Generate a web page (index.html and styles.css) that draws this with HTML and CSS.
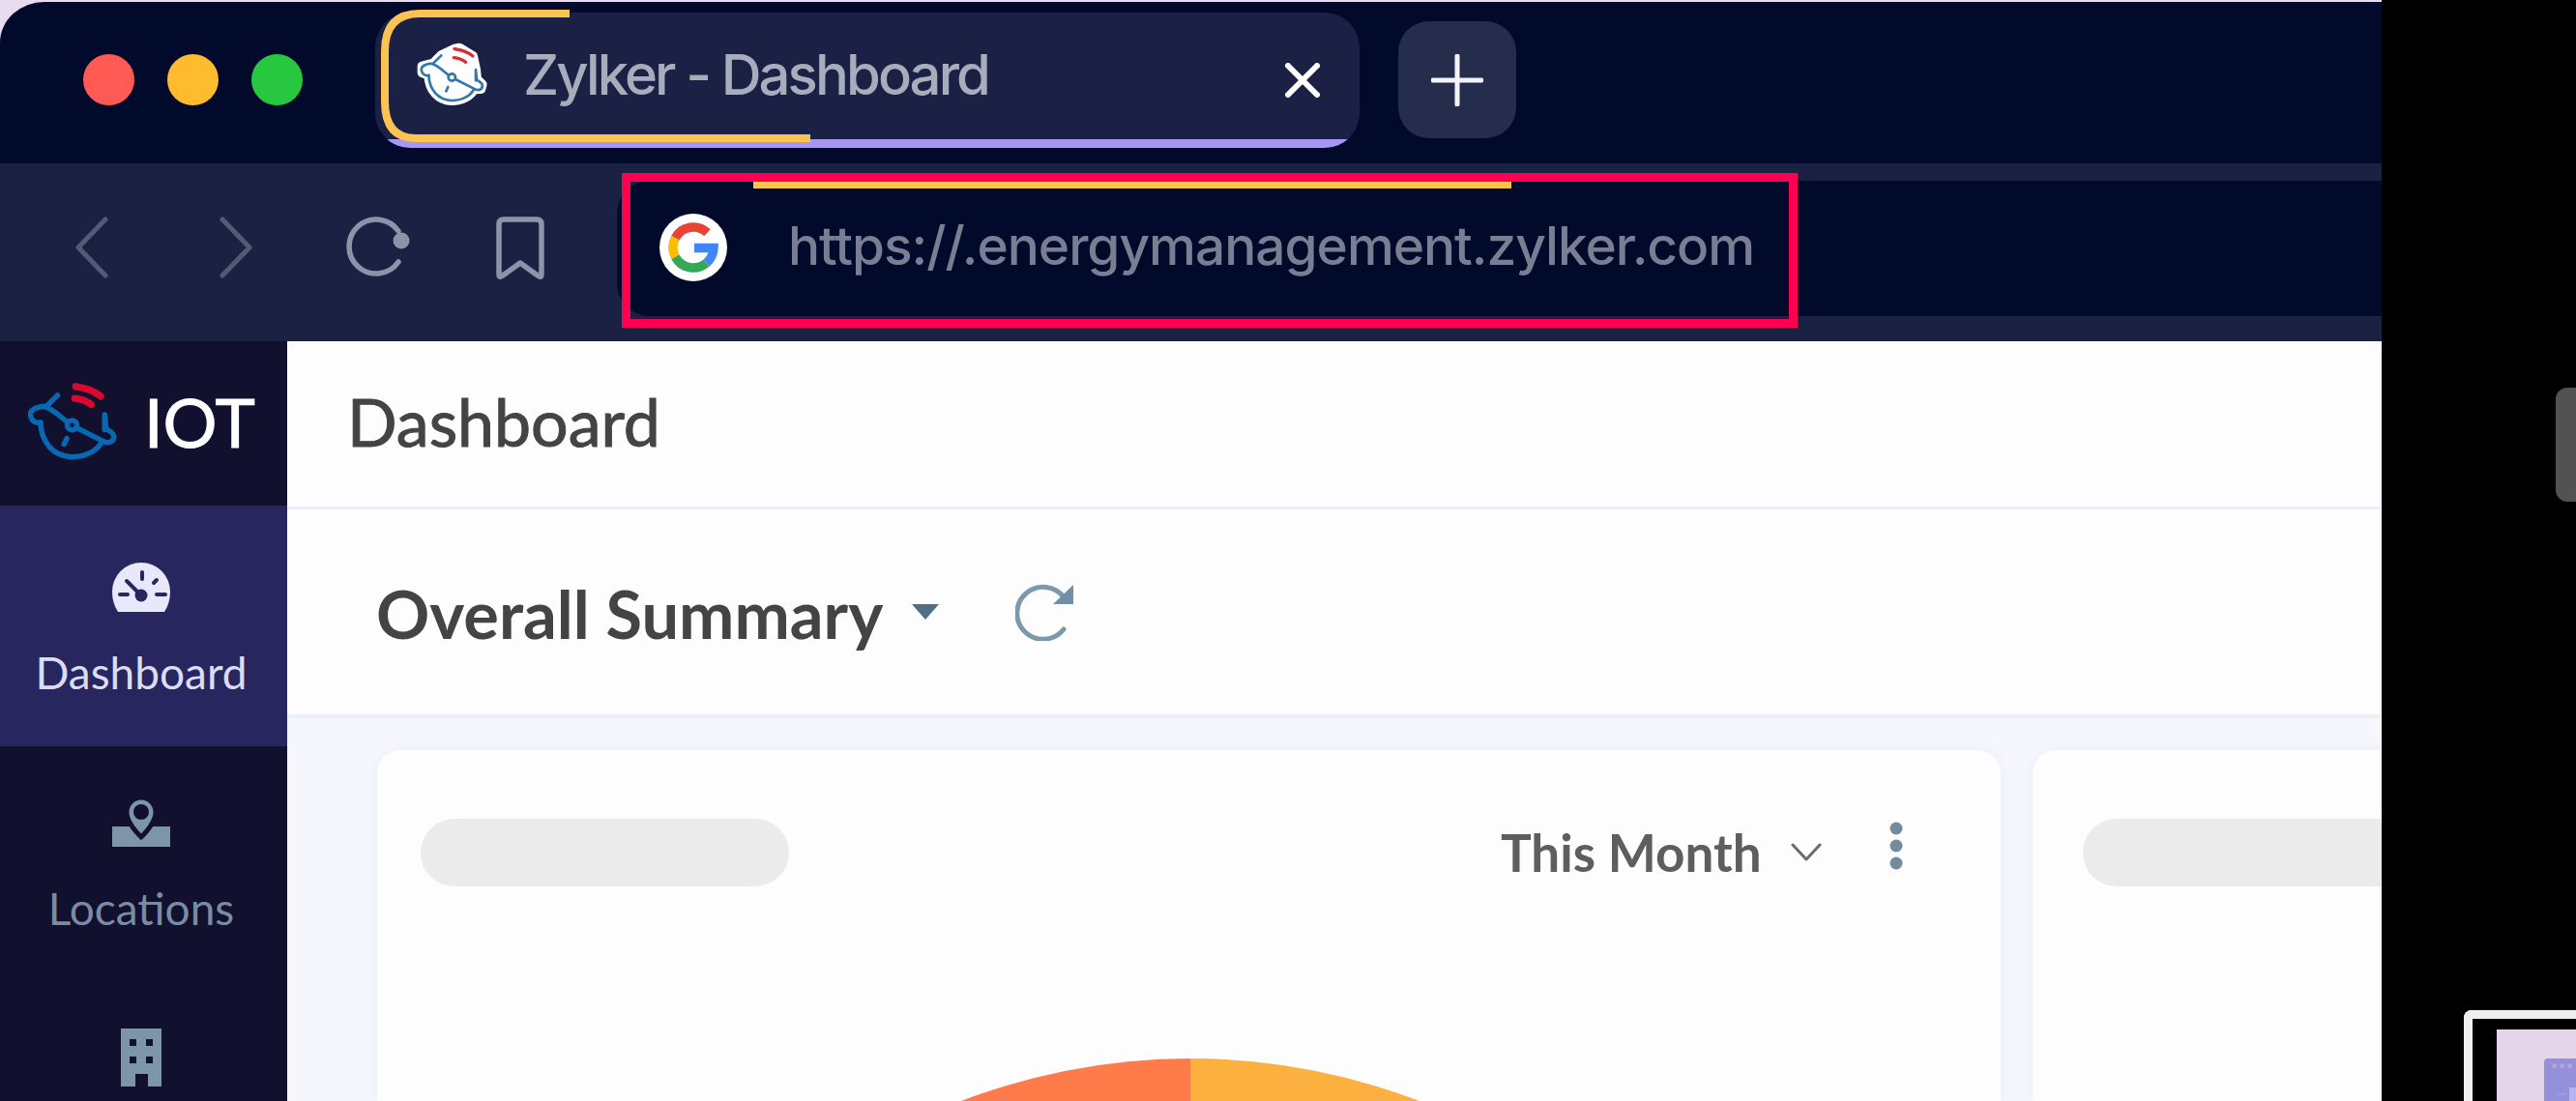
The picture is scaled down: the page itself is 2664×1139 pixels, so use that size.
FILE: index.html
```
<!DOCTYPE html>
<html lang="en">
<head>
    <meta charset="UTF-8">
    <title>Zylker - Dashboard</title>
    <link rel="stylesheet" href="styles.css">
</head>
<body>
    <!-- shared logo shape -->
    <svg class="defs">
        <symbol id="planet" overflow="visible">
            <path d="M70 143C72 190 100 220 140 222C175 222 200 207 210 187"/>
            <path d="M109 82L84 107C60 108 44 115 48 130C50 140 58 145 70 145"/>
            <path d="M82 109C102 116 114 130 132 143M153 156L210 185C225 195 240 186 236 172C230 160 222 164 219 156L216 126V160"/>
            <circle cx="142" cy="150" r="11"/>
            <path d="M130 180L124 193"/>
        </symbol>
        <symbol id="waves" overflow="visible">
            <path d="M150 62Q184 66 207 84"/>
            <path d="M148 89Q168 90 185 103"/>
        </symbol>
    </svg>

    <div class="window">
        <div class="tab-strip">
            <div class="lights">
                <span class="light red"></span>
                <span class="light yellow"></span>
                <span class="light green"></span>
            </div>
            <div class="tab">
                <svg class="tab-logo" viewBox="33 42 222 198">
                    <path class="halo" d="M109 82L150 62L165 59L207 84L216 126L219 156L236 172L232 186L210 187C200 207 175 222 140 222C100 220 72 190 70 143L50 135L50 116L84 107Z"/>
                    <use href="#planet" class="ring"/>
                    <use href="#waves" class="wave"/>
                </svg>
                <span class="tab-title">Zylker - Dashboard</span>
                <svg class="tab-close" viewBox="0 0 36 36"><path d="M3 3L33 33M33 3L3 33"/></svg>
            </div>
            <svg class="tab-trace" viewBox="0 0 460 150">
                <path d="M203 9H48Q12 9 12 48V100Q12 138 44 138H452"/>
            </svg>
            <div class="new-tab">
                <svg viewBox="0 0 54 54"><path d="M27 2V52M2 27H52"/></svg>
            </div>
        </div>

        <div class="toolbar">
            <svg class="nav back" viewBox="0 0 34 64"><path d="M31 3L3 32L31 61"/></svg>
            <svg class="nav forward" viewBox="0 0 34 64"><path d="M3 3L31 32L3 61"/></svg>
            <svg class="nav reload" viewBox="0 0 68 66">
                <path d="M54 17A28 28 0 1 0 54 49"/>
                <circle cx="57" cy="27" r="8.500"/>
            </svg>
            <svg class="nav bookmark" viewBox="0 0 50 66"><path d="M3 8Q3 3 8 3H42Q47 3 47 8V60Q47 64 43 61L25 48L7 61Q3 64 3 60Z"/></svg>
            <div class="address">
                <svg class="google" viewBox="-35 -35 70 70">
                    <circle r="35" fill="#fff"/>
                    <g fill="none" stroke-width="9.500">
                        <path stroke="#ea4335" d="M14.500 -15.200A21 21 0 0 0 -18.600 -9.700"/>
                        <path stroke="#fbbc05" d="M-18.600 -9.700A21 21 0 0 0 -18.600 9.700"/>
                        <path stroke="#34a853" d="M-18.600 9.700A21 21 0 0 0 13.500 16.100"/>
                        <path stroke="#4285f4" d="M13.500 16.100A21 21 0 0 0 21 0.500H1"/>
                    </g>
                </svg>
                <span class="url">https://.energymanagement.zylker.com</span>
                <div class="address-trace"></div>
                <div class="highlight"></div>
            </div>
        </div>

        <div class="app">
            <div class="sidebar">
                <div class="brand">
                    <svg viewBox="42 52 202 179">
                        <use href="#planet" class="ring"/>
                        <use href="#waves" class="wave"/>
                    </svg>
                    <span>IOT</span>
                </div>
                <div class="menu-item active">
                    <svg viewBox="0 0 60 52">
                        <path fill="#e9e8fb" d="M6 51Q0 42 0 30A30 30 0 0 1 60 30Q60 42 54 51Z"/>
                        <g class="dial">
                            <path d="M15 19L28 32M31 10V17M43 21L46 18M8 33H16M46 33H55"/>
                            <circle cx="30" cy="34" r="6.500"/>
                        </g>
                    </svg>
                    <span>Dashboard</span>
                </div>
                <div class="menu-item">
                    <svg viewBox="0 0 60 52">
                        <path fill="#7d95a9" d="M0 29H60V50H0Z"/>
                        <path fill="#7d95a9" stroke="#12102f" stroke-width="5" d="M30 40C22 32 15 23 15 14A15 15 0 0 1 45 14C45 23 38 32 30 40Z"/>
                        <circle cx="30" cy="14" r="8" fill="#12102f"/>
                    </svg>
                    <span>Locations</span>
                </div>
                <div class="menu-item building">
                    <svg viewBox="0 0 42 60">
                        <path fill="#7d95a9" fill-rule="evenodd" d="M0 0H42V60H28V47H15V60H0ZM9 11V18H16V11ZM26 11V18H33V11ZM9 29V36H16V29ZM26 29V36H33V29Z"/>
                    </svg>
                </div>
            </div>

            <div class="main">
                <div class="page-title">Dashboard</div>
                <div class="summary-bar">
                    <span>Overall Summary</span>
                    <svg class="caret" viewBox="0 0 28 16"><path d="M0 0H28L14 16Z"/></svg>
                    <svg class="refresh" viewBox="0 0 62 62">
                        <path d="M51 18A27 27 0 1 0 50 50"/>
                        <path class="head" d="M60 4V24H39Z"/>
                    </svg>
                </div>
                <div class="cards">
                    <div class="card">
                        <div class="card-head">
                            <div class="placeholder"></div>
                            <div class="range">This Month</div>
                            <svg class="chevron" viewBox="0 0 32 20"><path d="M2 2L16 17L30 2"/></svg>
                            <svg class="dots" viewBox="0 0 14 52">
                                <circle cx="7" cy="8" r="6.500"/>
                                <circle cx="7" cy="26" r="6.500"/>
                                <circle cx="7" cy="44" r="6.500"/>
                            </svg>
                        </div>
                        <svg class="pie" viewBox="0 0 1320 44">
                            <path fill="#ff7c4a" d="M660 660V0A660 660 0 0 0 0 660Z"/>
                            <path fill="#fbb03f" d="M660 660V0A660 660 0 0 1 1320 660Z"/>
                        </svg>
                    </div>
                    <div class="card">
                        <div class="card-head">
                            <div class="placeholder"></div>
                        </div>
                    </div>
                </div>
            </div>
        </div>
    </div>

    <div class="side">
        <div class="handle"></div>
        <div class="preview">
            <div class="preview-page">
                <div class="preview-window">
                    <div class="mini-lights"><i></i><i></i><i></i></div>
                    <div class="mini-brand">IOT<b></b></div>
                </div>
            </div>
        </div>
    </div>
</body>
</html>
```
FILE: styles.css
```
* {
    box-sizing: border-box;
}

body {
    margin: 0;
    display: flex;
    width: 2664px;
    height: 1139px;
    overflow: hidden;
    background: #000;
    font-family: Lato, "Liberation Sans", sans-serif;
}

svg {
    display: block;
    flex: none;
    fill: none;
    stroke-linecap: round;
    stroke-linejoin: round;
}

.defs {
    position: absolute;
    width: 0;
    height: 0;
}

.window {
    display: flex;
    flex-direction: column;
    width: 2463px;
    height: 1139px;
    padding-top: 2px;
    background: #e9dcf0;
    overflow: hidden;
}

/* tab strip */
.tab-strip {
    position: relative;
    display: flex;
    flex: none;
    height: 167px;
    background: #020a2b;
    border-top-left-radius: 46px 42px;
}

.lights {
    display: flex;
    gap: 34px;
    width: 388px;
    padding: 54px 0 0 86px;
}

.light {
    width: 53px;
    height: 53px;
    border-radius: 50%;
}

.red { background: #ff5b54; }
.yellow { background: #fdbb2d; }
.green { background: #27c840; }

.tab {
    position: relative;
    display: flex;
    width: 1018px;
    height: 140px;
    margin-top: 11px;
    padding-left: 43px;
    border-radius: 36px;
    background: #1a2145;
    overflow: hidden;
}

.tab::after {
    content: "";
    position: absolute;
    left: 0;
    right: 0;
    bottom: 0;
    height: 9px;
    background: #a797f0;
}

.tab-logo {
    width: 74px;
    height: 66px;
    margin-top: 31px;
}

.halo {
    fill: #fff;
    stroke: #fff;
    stroke-width: 30;
}

.tab-logo .ring {
    stroke: #3077b0;
    stroke-width: 8;
}

.tab-logo .wave {
    stroke: #d32f36;
    stroke-width: 10;
}

.tab-title {
    width: 824px;
    padding-left: 36px;
    font: 500 58px/128px Inter, "Liberation Sans", sans-serif;
    letter-spacing: -2.9px;
    color: #a9acbb;
}

.tab-close {
    width: 36px;
    height: 36px;
    margin-top: 52px;
    stroke: #fff;
    stroke-width: 6;
}

.tab-trace {
    position: absolute;
    left: 386px;
    top: 3px;
    width: 460px;
    height: 150px;
    stroke: #fac352;
    stroke-width: 8;
    stroke-linecap: butt;
}

.new-tab {
    display: flex;
    align-items: center;
    justify-content: center;
    width: 122px;
    height: 121px;
    margin: 20px 0 0 40px;
    border-radius: 32px;
    background: #262c4c;
}

.new-tab svg {
    width: 54px;
    height: 54px;
    stroke: #f2f3f8;
    stroke-width: 5;
}

/* toolbar */
.toolbar {
    display: flex;
    flex: none;
    height: 184px;
    padding-left: 78px;
    background: #1a2143;
}

.nav {
    margin-top: 55px;
    stroke: #8d93a8;
    stroke-width: 5.5;
}

.back,
.forward {
    width: 34px;
    height: 64px;
    stroke: #535b74;
    stroke-width: 5;
}

.forward {
    margin-left: 115px;
}

.reload {
    width: 68px;
    height: 66px;
    margin: 53px 0 0 97px;
}

.reload circle {
    fill: #8d93a8;
    stroke: none;
}

.bookmark {
    width: 50px;
    height: 66px;
    margin-left: 87px;
}

.address {
    position: relative;
    display: flex;
    flex: 1;
    height: 140px;
    margin: 18px 0 0 75px;
    padding: 34px 0 0 44px;
    border-radius: 34px 0 0 34px;
    background: #020a2b;
}

.google {
    width: 70px;
    height: 70px;
    stroke-linecap: butt;
    stroke-linejoin: miter;
}

.url {
    margin-left: 63px;
    font: 500 55px/66px Inter, "Liberation Sans", sans-serif;
    letter-spacing: -1px;
    color: #797e92;
    white-space: nowrap;
}

.address-trace {
    position: absolute;
    left: 141px;
    top: 0;
    width: 784px;
    height: 8px;
    background: #fac34c;
}

.highlight {
    position: absolute;
    left: 5px;
    top: -8px;
    width: 1216px;
    height: 160px;
    border: 9px solid #ff0050;
}

/* app */
.app {
    display: flex;
    flex: 1;
    min-height: 0;
}

.sidebar {
    width: 297px;
    background: #12102f;
    color: #7a8ba3;
    font-size: 46px;
    line-height: 56px;
}

.brand {
    display: flex;
    height: 170px;
    padding-left: 29px;
    color: #fff;
    font-size: 70px;
    line-height: 166px;
    -webkit-text-stroke: 1px #fff;
}

.brand svg {
    width: 92px;
    height: 82px;
    margin: 42px 28px 0 0;
}

.brand .ring {
    stroke: #0868b2;
    stroke-width: 12;
}

.brand .wave {
    stroke: #d9082c;
    stroke-width: 16;
}

.menu-item {
    display: flex;
    flex-direction: column;
    align-items: center;
    height: 245px;
    padding: 54px 5px 0 0;
}

.menu-item svg {
    width: 60px;
    height: 52px;
}

.menu-item span {
    margin-top: 34px;
}

.active {
    height: 249px;
    padding-top: 59px;
    background: #27265f;
    color: #dcdcf6;
}

.dial {
    stroke: #27265f;
    stroke-width: 4;
}

.dial circle {
    fill: #27265f;
    stroke: none;
}

.building {
    padding-top: 47px;
}

.building svg {
    width: 42px;
    height: 60px;
}

.main {
    display: flex;
    flex: 1;
    flex-direction: column;
    min-width: 0;
    background: #f6f7fd;
    color: #444;
}

.page-title {
    flex: none;
    height: 174px;
    padding-left: 62px;
    border-bottom: 3px solid #ededf8;
    background: #fdfdfd;
    font-size: 68px;
    line-height: 166px;
    -webkit-text-stroke: 1px #444;
}

.summary-bar {
    display: flex;
    flex: none;
    height: 216px;
    padding-left: 92px;
    border-bottom: 4px solid #eaf1f8;
    background: #fdfdfd;
    font-size: 68.5px;
    font-weight: bold;
    line-height: 216px;
}

.caret {
    width: 28px;
    height: 16px;
    margin: 98px 0 0 30px;
    fill: #526e86;
}

.refresh {
    width: 62px;
    height: 62px;
    margin: 74px 0 0 79px;
    stroke: #7b98ad;
    stroke-width: 5;
}

.refresh .head {
    fill: #7090a8;
    stroke: none;
}

.cards {
    display: flex;
    flex: 1;
    gap: 33px;
    padding: 33px 0 0 93px;
}

.card {
    flex: none;
    width: 1679px;
    border-radius: 24px 24px 0 0;
    background: #fdfdfd;
    box-shadow: 0 0 12px #e6ecf7;
}

.card-head {
    display: flex;
    height: 319px;
    padding: 71px 0 0 45px;
}

.card + .card .card-head {
    padding-left: 52px;
}

.placeholder {
    width: 381px;
    height: 70px;
    border-radius: 35px;
    background: #ebebeb;
}

.range {
    width: 300px;
    margin-left: 736px;
    color: #5e5e5e;
    font-size: 53px;
    font-weight: bold;
    line-height: 69px;
    white-space: nowrap;
}

.chevron {
    width: 32px;
    height: 20px;
    margin-top: 25px;
    stroke: #6b6b6b;
    stroke-width: 3;
}

.dots {
    width: 14px;
    height: 52px;
    margin: 2px 0 0 70px;
    fill: #728b9d;
}

.pie {
    width: 1320px;
    height: 44px;
    margin-left: 181px;
}

/* right edge */
.side {
    display: flex;
    flex-direction: column;
    align-items: flex-end;
    width: 201px;
    overflow: hidden;
}

.handle {
    flex: none;
    width: 21px;
    height: 118px;
    margin: 401px 0 526px;
    border-radius: 12px 0 0 12px;
    background: #525252;
}

.preview {
    width: 116px;
    height: 94px;
    padding: 11px 0 0 25px;
    border: solid #efefef;
    border-width: 9px 0 0 9px;
    border-top-left-radius: 8px;
}

.preview-page {
    height: 74px;
    padding: 30px 0 0 49px;
    background: #e5d5ea;
}

.preview-window {
    height: 44px;
    padding: 5px 0 0 8px;
    border-top-left-radius: 4px;
    background: #9490da;
}

.mini-lights {
    display: flex;
    gap: 3px;
}

.mini-lights i {
    flex: none;
    width: 5px;
    height: 5px;
    border-radius: 50%;
    background: #b7a2dc;
}

.mini-brand {
    display: flex;
    gap: 3px;
    margin: 20px 0 0 5px;
    color: #aaa9e5;
    font-size: 6px;
    line-height: 16px;
}

.mini-brand b {
    flex: none;
    width: 12px;
    height: 16px;
    background: #b5b5ec;
}
```
